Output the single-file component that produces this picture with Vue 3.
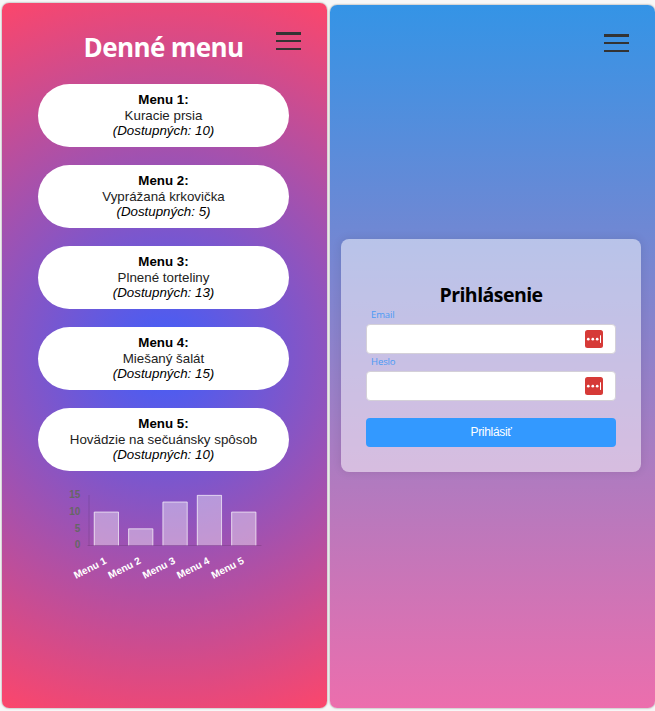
<script setup>
const menus = [
  { name: 'Menu 1', meal: 'Kuracie prsia', count: 10 },
  { name: 'Menu 2', meal: 'Vyprážaná krkovička', count: 5 },
  { name: 'Menu 3', meal: 'Plnené torteliny', count: 13 },
  { name: 'Menu 4', meal: 'Miešaný šalát', count: 15 },
  { name: 'Menu 5', meal: 'Hovädzie na sečuánsky spôsob', count: 10 }
]
const fields = [
  { label: 'Email', type: 'email' },
  { label: 'Heslo', type: 'password' }
]
const ticks = [15, 10, 5, 0]
const base = 55.3
const unit = 3.35
const step = 34.35
const barX = (i) => 36.3 + i * step
const barTop = (n) => base - n * unit
</script>

<template>
  <main class="page">
    <section class="phone menu-screen">
      <button class="burger" aria-label="Menu"><i></i><i></i><i></i></button>
      <h1>Denné menu</h1>
      <ul class="cards">
        <li v-for="m in menus" :key="m.name" class="card">
          <strong>{{ m.name }}:</strong>
          <span>{{ m.meal }}</span>
          <em>(Dostupných: {{ m.count }})</em>
        </li>
      </ul>
      <svg class="chart" width="220" height="100" viewBox="0 0 220 100">
        <text v-for="t in ticks" :key="t" class="tick" x="22.3" :y="barTop(t) + 3">{{ t }}</text>
        <path class="axis" d="M31 5V55.5M29.5 55.5H203.500" />
        <g v-for="(m, i) in menus" :key="m.name">
          <rect class="fill" :x="barX(i) - 0.5" :y="barTop(m.count)" width="25" :height="m.count * unit" />
          <path class="edge" :d="`M${barX(i)} ${base}V${barTop(m.count) + 0.3}h24.2V${base}`" />
          <text class="name" :transform="`translate(${barX(i) + 13} 73) rotate(-27)`">{{ m.name }}</text>
        </g>
      </svg>
    </section>

    <section class="phone login-screen">
      <button class="burger" aria-label="Menu"><i></i><i></i><i></i></button>
      <form class="login" @submit.prevent>
        <h2>Prihlásenie</h2>
        <label v-for="f in fields" :key="f.label" class="field">
          <span class="caption">{{ f.label }}</span>
          <span class="control">
            <input :type="f.type" />
            <svg width="18" height="18" viewBox="0 0 18 18">
              <rect width="18" height="18" rx="2.500" fill="#d63a37" />
              <g fill="#fff">
                <circle cx="3.300" cy="9.200" r="1.350" />
                <circle cx="7.800" cy="9.200" r="1.350" />
                <circle cx="12.200" cy="9.200" r="1.350" />
                <rect x="15" y="5.300" width="1" height="7.600" />
              </g>
            </svg>
          </span>
        </label>
        <button class="submit">Prihlásiť</button>
      </form>
    </section>
  </main>
</template>

<style>
body { margin: 0; background: #f7f7f7; }
</style>

<style scoped>
* { box-sizing: border-box; }
.page {
  display: flex;
  align-items: flex-end;
  gap: 3px;
  width: 655px;
  height: 711px;
  padding: 0 0 3px 2px;
  overflow: hidden;
  font-family: "Liberation Sans", Arial, sans-serif;
}
.phone {
  display: flex;
  flex-direction: column;
  width: 325px;
  flex: none;
  border-radius: 7px;
  box-shadow: 0 0 2px rgba(0, 0, 0, 0.5);
}
.menu-screen {
  height: 705px;
  align-items: center;
  padding-right: 2px;
  background: radial-gradient(circle, #3f5efb 0%, #fc466b 100%);
}
.login-screen {
  height: 703px;
  background: linear-gradient(#3494e6, #ec6ead);
}
.burger {
  display: flex;
  flex-direction: column;
  justify-content: space-between;
  align-self: flex-end;
  width: 25px;
  height: 18px;
  margin: 29px 26px 0 0;
  padding: 0;
  border: 0;
  background: none;
}
.menu-screen .burger { margin-right: 24px; }
.burger i { height: 2.500px; background: #333; }
h1 {
  margin: -21px 0 0;
  color: #fff;
  font: 700 26px/36px "Open Sans", "Noto Sans", sans-serif;
  letter-spacing: -0.600px;
  white-space: nowrap;
}
.cards {
  display: grid;
  gap: 18px;
  width: 251px;
  margin: 19.200px 0 0;
  padding: 0;
  list-style: none;
}
.card {
  display: flex;
  flex-direction: column;
  align-items: center;
  height: 62.900px;
  padding-top: 8.300px;
  border-radius: 32px;
  background: #fff;
  color: #000;
  font-size: 13.330px;
  line-height: 15.500px;
  white-space: nowrap;
}
.card span { color: #222; }
.chart { display: block; margin: 19.300px 0 0 9px; overflow: visible; }
.tick { fill: #666; font: 700 10px "Liberation Sans", sans-serif; text-anchor: end; }
.name { fill: #fff; font: 700 10.200px "Liberation Sans", sans-serif; text-anchor: end; }
.axis { fill: none; stroke: rgba(0, 0, 0, 0.12); stroke-width: 1; }
.fill { fill: rgba(255, 255, 255, 0.4); }
.edge { fill: none; stroke: rgba(255, 255, 255, 0.6); stroke-width: 1; }
.login {
  display: flex;
  flex-direction: column;
  width: 300px;
  height: 233px;
  margin: 187px 0 0 11px;
  padding: 42px 25px 0;
  border-radius: 8px;
  background: rgba(255, 255, 255, 0.5);
  box-shadow: 0 0 10px rgba(0, 0, 0, 0.1);
}
h2 {
  margin: 0;
  font: 700 19.500px/28px "Open Sans", "Noto Sans", sans-serif;
  letter-spacing: -0.550px;
  text-align: center;
}
.field { display: block; height: 47.300px; }
.caption {
  display: block;
  height: 15px;
  padding-left: 5px;
  color: #4a9af5;
  font: 9.500px/11.500px "Open Sans", "Noto Sans", sans-serif;
  letter-spacing: -0.100px;
}
.control {
  display: flex;
  align-items: center;
  height: 30px;
  padding-right: 12px;
  border: 1px solid #d4d0d8;
  border-radius: 4px;
  background: #fff;
}
.control input { flex: 1; min-width: 0; border: 0; outline: 0; background: none; }
.submit {
  height: 29px;
  margin-top: 14.500px;
  padding: 0 0 1px;
  border: 0;
  border-radius: 4px;
  background: #3399ff;
  color: #fff;
  font: 12px "Liberation Sans", Arial, sans-serif;
  letter-spacing: -0.300px;
}
</style>
